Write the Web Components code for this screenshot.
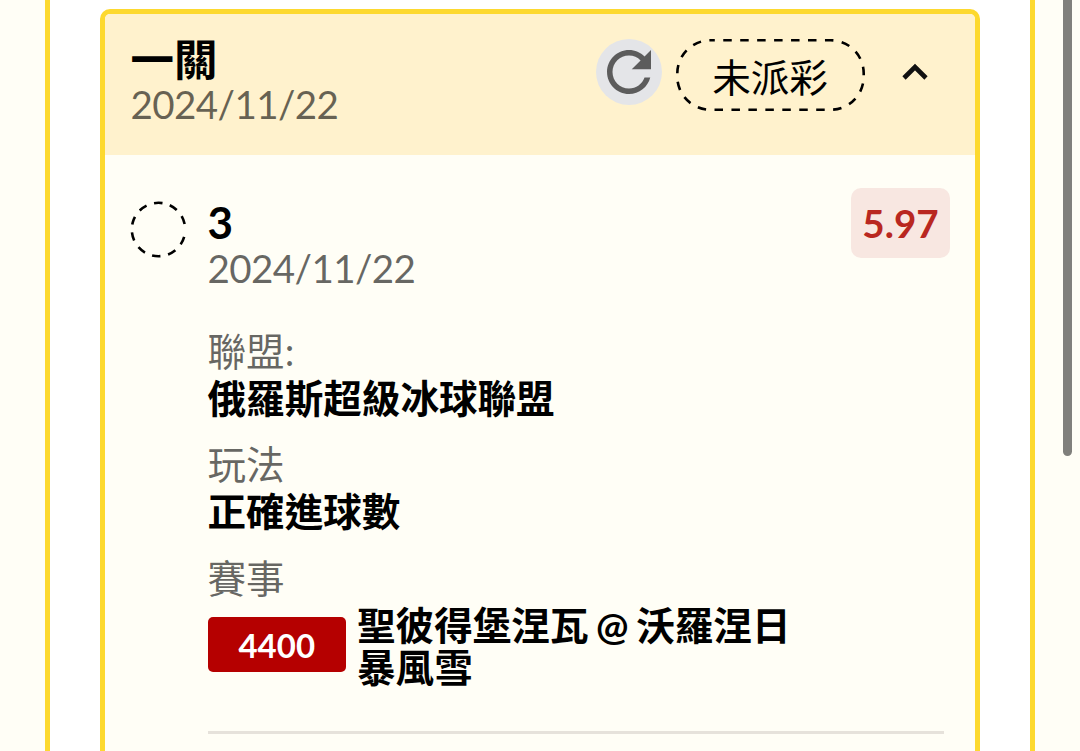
<!DOCTYPE html>
<html lang="zh-Hant">
<head>
<meta charset="UTF-8">
<title>一關</title>
<style>
    html, body { margin: 0; height: 100%; overflow: hidden; }
    body {
        background-color: #fffef6;
        color: #000;
        font-family: Lato, "Noto Sans CJK TC", sans-serif;
        font-size: 38.6px;
    }
</style>
</head>
<body>
<bet-page>
    <bet-card>
        <bet-header slot="header" date="2024/11/22" status="未派彩">一關</bet-header>
        <bet-leg pick="3" date="2024/11/22" odds="5.97">
            <bet-field label="聯盟:">俄羅斯超級冰球聯盟</bet-field>
            <bet-field label="玩法">正確進球數</bet-field>
            <bet-field label="賽事"><bet-match code="4400">聖彼得堡涅瓦 @ 沃羅涅日<br>暴風雪</bet-match></bet-field>
        </bet-leg>
    </bet-card>
</bet-page>

<script>
class BetElement extends HTMLElement {
    constructor() {
        super();
        this.attachShadow({ mode: 'open' });
    }

    connectedCallback() {
        this.shadowRoot.innerHTML = this.render();
    }

    attr(name) {
        return this.getAttribute(name) || '';
    }
}

class BetPage extends BetElement {
    render() {
        return `
<style>
    :host { display: block; height: 100vh; box-sizing: border-box; padding: 0 45px; position: relative; }
    main {
        box-sizing: border-box;
        height: 100%;
        padding: 8.5px 50px 0;
        background-color: #fff;
        border: solid #fdd92f;
        border-width: 0 5px;
        overflow: hidden;
    }
    /* scroll thumb floats over the right margin */
    .thumb {
        position: absolute;
        top: -10px;
        right: 8px;
        width: 9px;
        height: 466px;
        border-radius: 5px;
        background-color: #80807c;
    }
</style>
<main><slot></slot></main>
<div class="thumb"></div>`;
    }
}

class BetCard extends BetElement {
    render() {
        return `
<style>
    :host {
        display: block;
        box-sizing: border-box;
        height: 900px;
        border: 5.5px solid #fdd92f;
        border-radius: 10px;
        background-color: #fffef6;
        overflow: hidden;
    }
</style>
<slot name="header"></slot>
<slot></slot>`;
    }
}

class BetHeader extends BetElement {
    render() {
        return `
<style>
    :host {
        display: flex;
        box-sizing: border-box;
        height: 141px;
        padding: 22px 46.5px 0 25.5px;
        background-color: #fff2cd;
    }
    .text { flex: 1; }
    h2 { margin: 0; font-size: 43.5px; line-height: 46px; font-weight: 700; }
    .date { line-height: 45px; letter-spacing: -.6px; color: rgba(0, 0, 0, .6); }
    .tools { display: flex; align-items: center; height: 72px; padding-top: 3px; }
    .refresh { display: block; width: 66px; height: 66px; margin: -6px 14px 0 0; }
    .chevron { display: block; width: 28px; height: 20px; margin: -5px 0 0 36px; }
    .status { position: relative; width: 189px; height: 72px; line-height: 76px; text-align: center; }
    .status svg { position: absolute; left: 0; top: 0; }
</style>
<div class="text">
    <h2><slot></slot></h2>
    <div class="date">${this.attr('date')}</div>
</div>
<div class="tools">
    <svg class="refresh" viewBox="0 0 24 24">
        <circle cx="12" cy="12" r="12" fill="#e4e5e8"/>
        <path d="M17.65 6.35C16.2 4.9 14.21 4 12 4c-4.42 0-7.99 3.58-7.99 8s3.57 8 7.99 8c3.73 0 6.84-2.55 7.73-6h-2.08c-.82 2.33-3.04 4-5.65 4-3.31 0-6-2.69-6-6s2.69-6 6-6c1.66 0 3.14.69 4.22 1.78L13 11h7V4l-2.35 2.35z" fill="#5c5c5c"/>
    </svg>
    <div class="status">
        <svg width="189" height="72" viewBox="0 0 189 72">
            <rect x="1.3" y="1.3" width="186.4" height="69.4" rx="33" fill="none" stroke="#000" stroke-width="2.6" stroke-dasharray="8.5 8.45" stroke-dashoffset="4"/>
        </svg>
        ${this.attr('status')}
    </div>
    <svg class="chevron" viewBox="0 0 28 20"><path d="M3 16L14 5L25 16" fill="none" stroke="#111" stroke-width="4.6"/></svg>
</div>`;
    }
}

class BetLeg extends BetElement {
    render() {
        // ten dashes, with the wide gap on the right of the ring
        const dashes = '18 16.9 '.repeat(9) + '18 27.9';
        return `
<style>
    :host { display: grid; grid-template-columns: 57px 1fr; column-gap: 21px; padding: 33px 25px 0 24.5px; }
    .ring { display: block; margin-top: 13px; }
    .top { display: flex; justify-content: space-between; height: 140px; }
    .pick { font-size: 44px; font-weight: 700; line-height: 46px; padding-top: 11px; }
    .date { line-height: 46px; letter-spacing: -.6px; color: rgba(0, 0, 0, .6); }
    .odds {
        box-sizing: border-box;
        width: 99px;
        height: 70px;
        line-height: 71px;
        border-radius: 10px;
        text-align: center;
        font-weight: 700;
        color: #b92720;
        background-color: #f8e7e1;
    }
    .fields { display: flex; flex-direction: column; gap: 19.5px; margin-right: 6px; padding-bottom: 42.5px; border-bottom: 3px solid #e6e2db; }
</style>
<svg class="ring" width="57" height="57" viewBox="0 0 57 57">
    <circle cx="28.5" cy="28.5" r="26.7" fill="none" stroke="#000" stroke-width="2.6" pathLength="360" stroke-dasharray="${dashes}" transform="rotate(16 28.5 28.5)"/>
</svg>
<div>
    <div class="top">
        <div>
            <div class="pick">${this.attr('pick')}</div>
            <div class="date">${this.attr('date')}</div>
        </div>
        <div class="odds">${this.attr('odds')}</div>
    </div>
    <div class="fields"><slot></slot></div>
</div>`;
    }
}

class BetField extends BetElement {
    render() {
        return `
<style>
    :host { display: block; }
    .label { line-height: 47px; color: rgba(0, 0, 0, .6); }
    .value { line-height: 47px; font-weight: 700; }
</style>
<div class="label">${this.attr('label')}</div>
<div class="value"><slot></slot></div>`;
    }
}

class BetMatch extends BetElement {
    render() {
        return `
<style>
    :host { display: flex; gap: 11px; line-height: 41.5px; padding-top: 3.5px; word-spacing: -1.8px; }
    .code {
        width: 138.5px;
        height: 55.5px;
        margin-top: 11.5px;
        border-radius: 5px;
        text-align: center;
        font-size: 33px;
        line-height: 57px;
        color: #fff;
        background-color: #b50000;
    }
</style>
<div class="code">${this.attr('code')}</div>
<div><slot></slot></div>`;
    }
}

customElements.define('bet-page', BetPage);
customElements.define('bet-card', BetCard);
customElements.define('bet-header', BetHeader);
customElements.define('bet-leg', BetLeg);
customElements.define('bet-field', BetField);
customElements.define('bet-match', BetMatch);
</script>
</body>
</html>
